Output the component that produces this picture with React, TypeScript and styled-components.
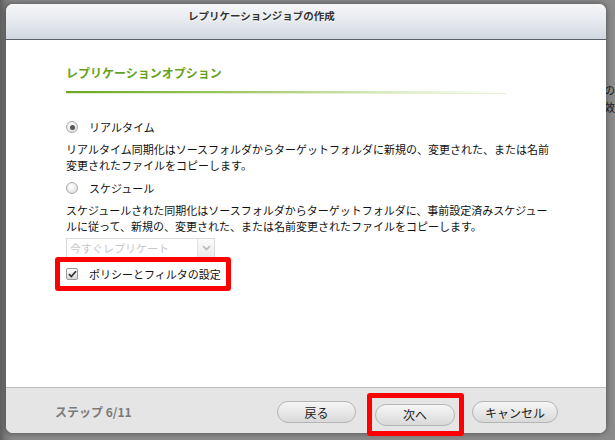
import React from 'react';
import styled, { createGlobalStyle } from 'styled-components';

const GlobalStyle = createGlobalStyle`
	html, body {
		margin: 0;
		padding: 0;
	}
	body {
		width: 615px;
		height: 440px;
		overflow: hidden;
		background: #8a8a8a;
		font-family: "Noto Sans CJK JP", "Liberation Sans", sans-serif;
	}
`;

const Screen = styled.div`
	position: relative;
	width: 615px;
	height: 440px;
	overflow: hidden;
	background: linear-gradient(90deg, #5f5f5f 0, #7c7c7c 6px, #8b8b8b 14px, #8b8b8b 100%);
`;

const BehindText = styled.div`
	position: absolute;
	left: 604px;
	top: 82px;
	width: 11px;
	overflow: hidden;
	font-size: 11px;
	line-height: 17px;
	color: #1c1c1c;
	white-space: nowrap;
`;

const Dialog = styled.div`
	position: absolute;
	left: 6px;
	top: 4px;
	width: 600px;
	height: 429px;
	display: flex;
	flex-direction: column;
	background: #fff;
	border-radius: 7px;
	box-shadow: 0 0 6px rgba(0, 0, 0, 0.45);
`;

const TitleBar = styled.div`
	height: 36px;
	box-sizing: border-box;
	padding: 5px 0 0 182px;
	border-bottom: 1px solid #5a5f66;
	border-radius: 7px 7px 0 0;
	background: linear-gradient(180deg, #f5f6f8 0%, #e4e8ed 55%, #d2d8e0 100%);
	font-size: 10.5px;
	font-weight: 700;
	line-height: 14px;
	color: #333;
	text-shadow: 0 1px 0 #fff;
`;

const Body = styled.div`
	flex: 1;
	display: flex;
	flex-direction: column;
	align-items: flex-start;
	padding: 25px 0 0 60px;
	font-size: 11px;
	color: #111;
`;

const Heading = styled.div`
	font-size: 12px;
	font-weight: 700;
	line-height: 16px;
	color: #64a21c;
`;

const Rule = styled.div`
	width: 440px;
	height: 2px;
	margin-top: 10px;
	background: linear-gradient(90deg, #6aa81f 0%, #a8cf73 45%, #dcedc6 75%, rgba(255, 255, 255, 0) 100%);
	border-bottom: 1px solid #e4f0d4;
`;

const OptionRow = styled.label<{ top: number }>`
	display: flex;
	align-items: center;
	gap: 11px;
	height: 16px;
	margin-top: ${(p) => p.top}px;
	font-size: 11px;
	color: #111;
`;

const Radio = styled.span<{ checked?: boolean }>`
	position: relative;
	width: 12px;
	height: 12px;
	box-sizing: border-box;
	border: 1px solid #a8a8a8;
	border-radius: 50%;
	background: radial-gradient(circle at 40% 35%, #ffffff 0%, #f0f0f0 45%, #d4d4d4 100%);

	&::after {
		content: '';
		display: ${(p) => (p.checked ? 'block' : 'none')};
		position: absolute;
		left: 2.5px;
		top: 2.5px;
		width: 5px;
		height: 5px;
		border-radius: 50%;
		background: #555;
	}
`;

const Description = styled.p`
	margin: 6px 0 0;
	font-size: 11px;
	line-height: 16px;
	color: #111;
	white-space: nowrap;
`;

const Select = styled.div`
	display: flex;
	width: 149px;
	height: 20px;
	box-sizing: border-box;
	margin-top: 4px;
	border: 1px solid #dadada;
	background: #fff;
`;

const SelectText = styled.span`
	flex: 1;
	padding-left: 3px;
	font-size: 11px;
	line-height: 18px;
	color: #c8c8c8;
`;

const SelectArrow = styled.span`
	width: 16px;
	display: flex;
	align-items: center;
	justify-content: center;
	border-left: 1px solid #e2e2e2;
	background: linear-gradient(180deg, #fbfbfb, #ececec);
`;

const Highlight = styled.div`
	border: 5px solid #f00;
	border-radius: 3px;
`;

const CheckHighlight = styled(Highlight)`
	box-sizing: border-box;
	width: 176px;
	height: 34px;
	margin: -1px 0 0 -11px;
	padding-left: 6px;
	display: flex;
	align-items: center;
`;

const CheckRow = styled.label`
	display: flex;
	align-items: center;
	gap: 11px;
	font-size: 11px;
	color: #111;
`;

const CheckBox = styled.span`
	width: 12px;
	height: 12px;
	box-sizing: border-box;
	display: flex;
	align-items: center;
	justify-content: center;
	border: 1px solid #9a9a9a;
	border-radius: 2px;
	background: linear-gradient(180deg, #ffffff, #d8d8d8);
`;

const Footer = styled.div`
	height: 46px;
	box-sizing: border-box;
	display: flex;
	align-items: flex-start;
	padding: 13px 48px 0 49px;
	border-top: 1px solid #bcbcbc;
	border-radius: 0 0 7px 7px;
	background: #e5e5e5;
`;

const Step = styled.div`
	flex: 1;
	font-size: 12px;
	font-weight: 700;
	line-height: 22px;
	color: #7a7a7a;
`;

const Button = styled.button<{ width: number }>`
	width: ${(p) => p.width}px;
	height: 22px;
	padding: 0;
	border: 1px solid #b5b5b5;
	border-radius: 11px;
	background: linear-gradient(180deg, #f6f6f6 0%, #e8e8e8 50%, #d9d9d9 100%);
	font-family: inherit;
	font-size: 12px;
	color: #222;
	cursor: pointer;
`;

const NextHighlight = styled(Highlight)`
	margin: -8px 8px 0 11px;
	padding: 3px 4px 5px 3px;
`;

export default function App() {
	return (
		<>
			<GlobalStyle />
			<Screen>
				<BehindText>
					の、
					<br />
					效
				</BehindText>
				<Dialog>
					<TitleBar>レプリケーションジョブの作成</TitleBar>
					<Body>
						<Heading>レプリケーションオプション</Heading>
						<Rule />
						<OptionRow top={25}>
							<Radio checked />
							リアルタイム
						</OptionRow>
						<Description>
							リアルタイム同期化はソースフォルダからターゲットフォルダに新規の、変更された、または名前
							<br />
							変更されたファイルをコピーします。
						</Description>
						<OptionRow top={7}>
							<Radio />
							スケジュール
						</OptionRow>
						<Description>
							スケジュールされた同期化はソースフォルダからターゲットフォルダに、事前設定済みスケジュー
							<br />
							ルに従って、新規の、変更された、または名前変更されたファイルをコピーします。
						</Description>
						<Select>
							<SelectText>今すぐレプリケート</SelectText>
							<SelectArrow>
								<svg width="9" height="6" viewBox="0 0 9 6">
									<path d="M1 1l3.5 3.5L8 1" fill="none" stroke="#b8b8b8" strokeWidth="1.6" />
								</svg>
							</SelectArrow>
						</Select>
						<CheckHighlight>
							<CheckRow>
								<CheckBox>
									<svg width="9" height="8" viewBox="0 0 9 8">
										<path d="M1 4.2l2.3 2.3L8 1.2" fill="none" stroke="#333" strokeWidth="1.7" />
									</svg>
								</CheckBox>
								ポリシーとフィルタの設定
							</CheckRow>
						</CheckHighlight>
					</Body>
					<Footer>
						<Step>ステップ 6/11</Step>
						<Button width={79}>戻る</Button>
						<NextHighlight>
							<Button width={80}>次へ</Button>
						</NextHighlight>
						<Button width={86}>キャンセル</Button>
					</Footer>
				</Dialog>
			</Screen>
		</>
	);
}
